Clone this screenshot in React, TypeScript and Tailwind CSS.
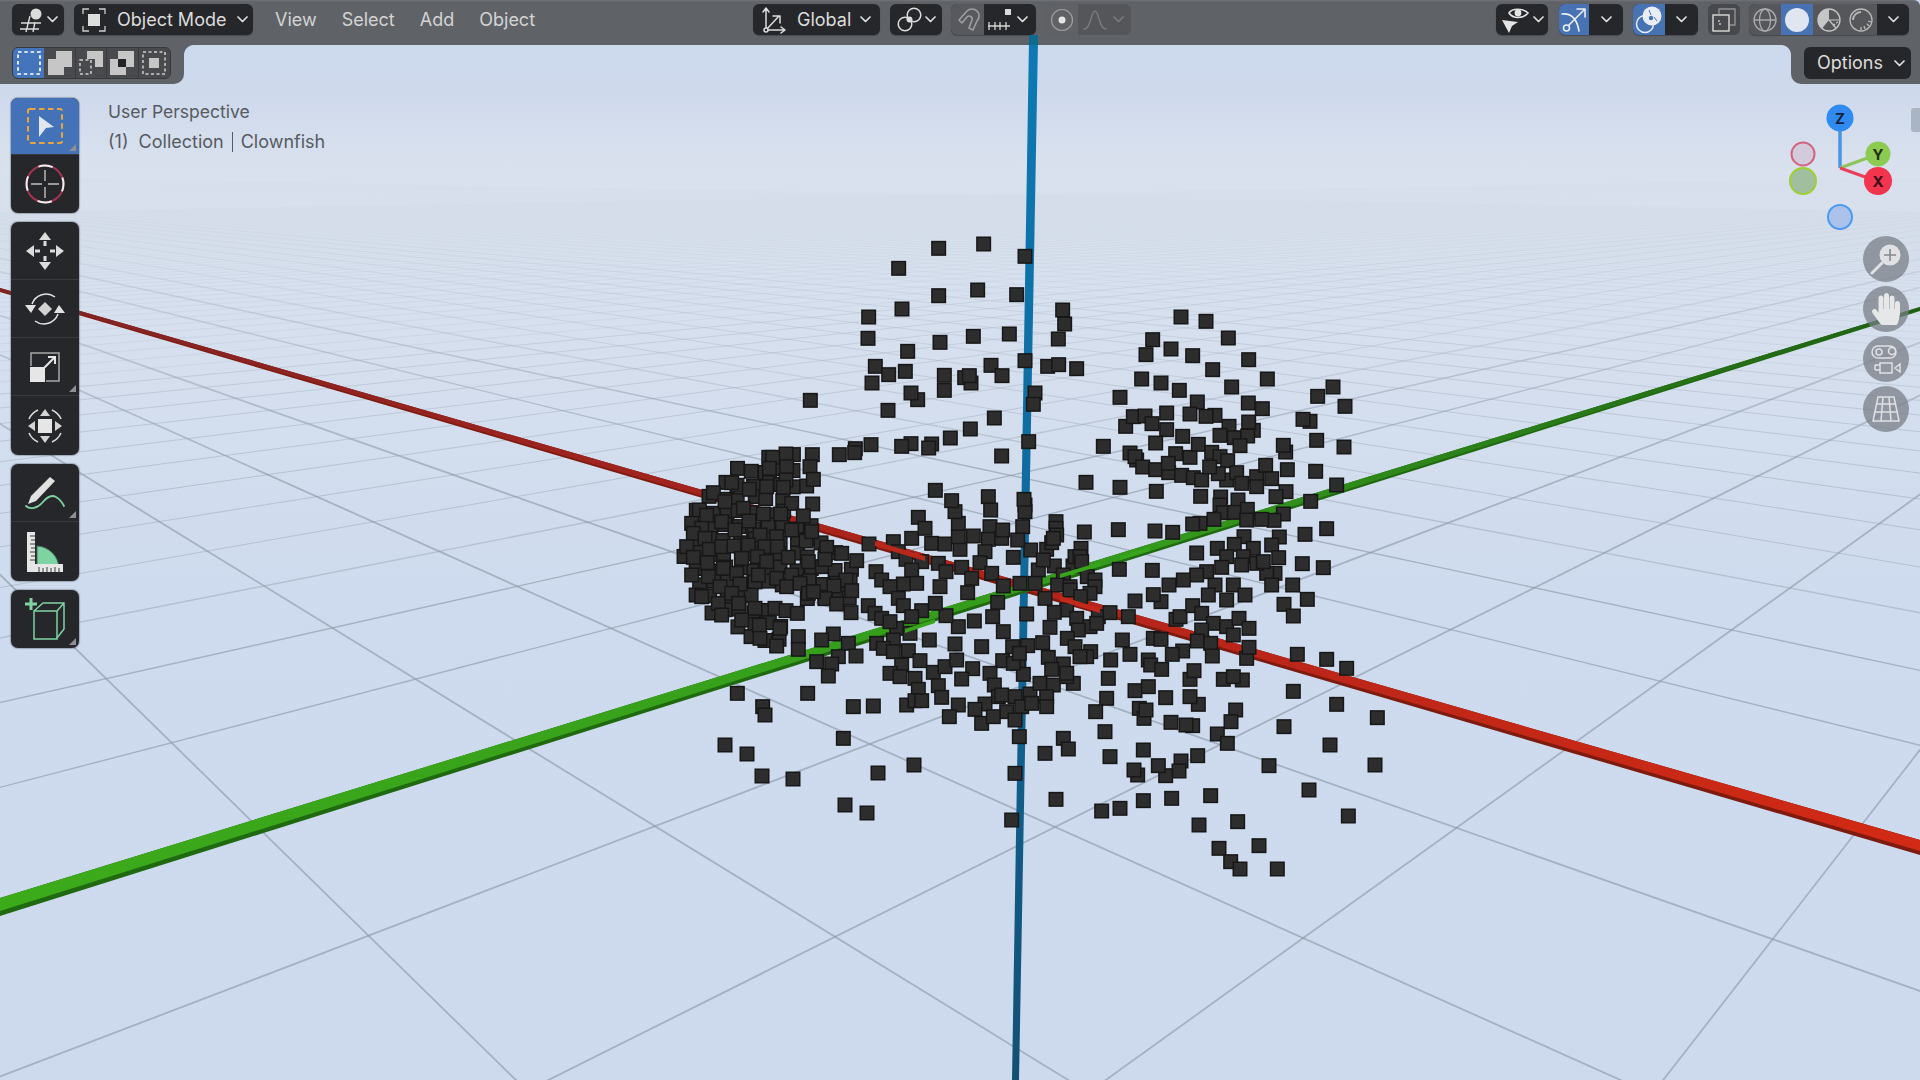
import type { ReactNode } from "react"
import { FaHandPaper } from "react-icons/fa"

// ---- viewport scene ----
const O = [1025, 587]
const VR = [-413, 170]
const VG = [2371, 170]

function along(v: number[], k: number, s: number) {
  const f = s / (s + k)
  return [O[0] + (v[0] - O[0]) * f, O[1] + (v[1] - O[1]) * f]
}

function gridLine(from: number[], p: number[]) {
  const t = (1250 - from[1]) / (p[1] - from[1])
  return [from[0], from[1], from[0] + (p[0] - from[0]) * t, 1250]
}

const gridSteps = Array.from({ length: 96 }, (_, i) => i - 9)
const gridLines = gridSteps.flatMap((s) => [
  { s, l: gridLine(VR, along(VG, 11, s)) },
  { s, l: gridLine(VG, along(VR, 5.45, s * 0.5)) },
])

const crops: [number, number, number[]][] = [
  [660, 220, [836,85,971,72,1095,109,716,145,836,227,953,210,1070,224,726,267,626,291,624,355,840,367,940,349,1048,342,1208,270,1214,312,1195,357,743,394,646,439,686,464,736,454,636,489,853,466,853,511,914,473,933,489,928,467,993,436,1026,467,1095,422,1163,439,1196,434,1250,446,773,539,753,519,684,571,1003,594,931,627,451,541,1125,519,1120,553,871,654,1106,665,1025,708,815,672,806,684,753,671,725,679,633,674,586,686,584,698,538,704,826,811,1278,787,1380,802,1380,532,1330,679,1397,619,1420,590,1410,699,1430,720]],
  [1000, 290, [543,81,618,94,685,144,458,149,513,177,438,194,578,197,746,209,638,239,425,267,483,279,802,267,695,291,538,301,360,322,592,336,745,339,787,356,999,291,953,319,1035,349,400,380,435,378,456,401,377,409,500,369,570,372,645,376,618,379,930,394,909,388,760,421,746,396,687,409,500,419,548,439,660,436,703,443,743,438,467,459,720,467,950,451,857,486,850,466,1032,471,310,469,405,500,390,489,428,531,467,539,506,548,527,491,570,502,595,463,635,487,660,500,683,512,505,520,545,556,580,563,605,570,680,570,655,551,629,531,710,548,725,580,770,560,797,526,815,566,862,539,947,544,1010,585,858,605,828,620,770,590,258,577,360,591,469,604,602,619,662,621,714,630,660,645,670,668,703,667,742,658,932,634,850,672,822,691,785,688,740,690,642,688,600,700,578,702,355,719,465,723,518,727,253,726,980,716,915,733,838,741,732,740,815,765,760,775,703,763,652,775,590,789,836,803,907,821,970,833,680,800,730,800,725,825,665,832,620,845,590,855,550,870,507,885,457,841,358,838,243,775,219,828,163,828,115,840,190,855,140,778,92,780,40,802,155,758,68,710,53,750,75,645,75,665,168,695,168,715,170,735,825,850,800,850,770,820,790,815,700,885,645,885,815,885,878,885,173,885,105,880,60,880,262,860,285,870,285,890,210,890,225,800,240,800]],
  [660, 440, [378,42,338,52,457,44,380,80,328,85,450,80,378,120,320,140,370,142,440,138,460,118,395,190,458,192,215,128,268,148,160,158,195,185,250,205,310,222,362,222,430,228,118,210,140,226,185,245,225,270,267,243,300,285,350,290,395,270,438,303,455,275,95,250,125,265,100,280,135,295,80,320,148,328,185,320,222,318,265,315,315,320,352,320,100,352,142,368,190,385,245,355,292,350,320,365,385,352,445,365,95,405,145,410,180,440,230,400,240,432,295,405,350,415,395,405,380,440,420,430,445,460,125,470,175,490,215,460,236,490,285,505,345,505,378,512,412,520,185,525,245,540,298,555,360,565,300,595,350,618,415,590,415,628,500,322,545,340,590,362,495,358,558,420,522,438,575,452,495,476,530,492,573,518,460,455,520,582,485,600,565,610,588,648,535,650,470,665,515,672,505,708,232,760,443,760,308,800,315,825,580,800,640,798,740,795,627,312,700,305,715,335,755,295,738,358,785,365,755,390,815,310,855,312,835,370,858,395,905,382,940,288,900,328,895,290,895,250,885,215,875,182,985,170,992,210,990,260,985,298,975,335,960,368,935,415,995,400,1030,438,1082,432,1125,430,1193,437,1230,450,1155,475,1185,378,1215,405,1240,378,1262,325,1250,352,1275,407,1305,425,1290,460,1262,470,1220,510,1183,517,1250,535,1315,530,1290,560,1255,570,1222,595,1170,562,1148,608,1100,522,1013,487,998,530,943,543,895,560,858,527,826,490,840,440,923,458,770,430,730,432,648,395,665,420,690,440,715,475,730,497,785,512,755,530,710,565,750,580,625,497,645,520,665,535,690,545,700,600,650,610,670,625,700,635,745,632,780,662,725,675,690,700,720,710,765,715,820,697,855,680,890,660,808,600,885,612,965,620,1030,575,1058,620,1103,617,1028,662,1075,670,1165,652,1245,620,1292,635,1280,650,1210,672,1175,688,1090,703,990,700,938,686,905,717,835,737,775,748,1003,735,1015,770,1065,770,1110,762,1140,730,1180,735,1240,730,1220,710,1160,770,1160,800,1085,800,1040,815,975,792,945,808,895,795,845,772,765,782,785,782,868,830,965,850,1000,830,1065,840,1092,178,1095,215,1085,260,1075,295,1112,330,1060,350,1135,390,1160,325,1180,295,1188,250,1025,295,1028,270,775,232,795,265,1272,275,1375,268,1378,388,1425,483,1387,600,1410,643,1352,660,1345,715,1340,775,1425,752,1307,815,1335,875,1078,890,1210,895,1278,127,1380,140,550,895,1265,365,1150,360]],
  [1000, 590, [135,25,163,66,198,60,80,73,230,85,150,113,15,125,238,122,295,80,270,105,290,100,407,33,483,35,460,14,385,80,330,68,367,150,203,145,128,160,38,170,83,165,225,175,273,185,145,202,265,205,240,200,333,208,390,193,460,145,483,148,528,88,540,80,578,47,605,70,640,100,680,110,717,85,735,15,680,30,625,15,747,115,700,135,605,120,592,153,632,160,548,183,517,193,637,198,740,205,747,172,445,210,452,225,485,238,570,268,582,242,670,268,727,270,700,260,445,290,408,303,497,323,595,343,570,320,707,360,693,395,418,355,432,385,438,360,513,397,578,407,558,405,652,432,682,460,593,497,543,513,537,543,497,557,475,527,413,555,402,540,430,480,330,500,315,425,287,365,320,325,325,263,892,193,980,208,1040,235,880,304,1010,343,1132,383,852,410,990,465,1125,525,807,527,927,600,1045,678,632,617,515,625,430,632,360,655,305,663,168,628,188,450,205,477,135,490,58,448,45,550,35,690,597,705,713,695,657,775,777,767,692,815,720,837,832,837,852,43,880,78,922,28,70,253,125,275,155,235,190,225,160,285,90,312,45,320,140,315,220,280,200,250,5,315,95,340,140,350,70,358,20,365,45,395,15,215,40,220,58,190]],
  [0, 0, [737,693,808,693,763,707,765,715,854,707,874,706,908,705,725,745,747,754,844,741,762,776,793,779,878,773,845,805,867,813,914,765].map((v) => v * 3)],
]

const squares: number[][] = []
for (const [ox, oy, flat] of crops) {
  for (let i = 0; i < flat.length; i += 2) {
    const x = ox + flat[i] / 3
    const y = oy + flat[i + 1] / 3
    if (!squares.some((p) => Math.abs(p[0] - x) < 3 && Math.abs(p[1] - y) < 3)) squares.push([x, y])
  }
}

// the dense left end of the fish: hidden squares filling the crescent
const crescent = [320,40,410,30,415,140,385,210,450,260,590,360,590,500,440,470,310,450,370,560,370,630,300,615,180,540,100,460,65,340,90,230,150,140,230,95]

function inCrescent(x: number, y: number) {
  let inside = false
  const n = crescent.length / 2
  for (let i = 0, j = n - 1; i < n; j = i++) {
    const xi = crescent[i * 2], yi = crescent[i * 2 + 1]
    const xj = crescent[j * 2], yj = crescent[j * 2 + 1]
    if (yi > y !== yj > y && x < ((xj - xi) * (y - yi)) / (yj - yi) + xi) inside = !inside
  }
  return inside
}

const fill: number[][] = []
for (let gy = 50; gy < 640; gy += 42) {
  for (let gx = 70; gx < 600; gx += 42) {
    if (inCrescent(gx, gy)) {
      fill.push([660 + (gx + 7 * Math.sin(gx * gy)) / 3, 440 + (gy + 7 * Math.cos(gx + gy)) / 3])
    }
  }
}

function Square({ x, y }: { x: number; y: number }) {
  return <rect x={x - 6.75} y={y - 6.75} width="13.5" height="13.5" fill="#2d2d2d" stroke="#171717" strokeWidth="1.5" />
}

function Scene() {
  return (
    <svg className="absolute inset-0" width="1920" height="1080" viewBox="0 0 1920 1080">
      <defs>
        <linearGradient id="horizon" x1="0" y1="0" x2="0" y2="1">
          <stop offset="0" stopColor="#d9e1ee" stopOpacity="1" />
          <stop offset="0.12" stopColor="#d9e1ee" stopOpacity="0.92" />
          <stop offset="0.4" stopColor="#d7e0ee" stopOpacity="0.55" />
          <stop offset="1" stopColor="#d3ddee" stopOpacity="0" />
        </linearGradient>
        <linearGradient id="redAxis" gradientUnits="userSpaceOnUse" x1="0" y1="0" x2="1920" y2="0">
          <stop offset="0" stopColor="#7d2424" />
          <stop offset="0.4" stopColor="#a8231c" />
          <stop offset="1" stopColor="#d22a14" />
        </linearGradient>
        <linearGradient id="greenAxis" gradientUnits="userSpaceOnUse" x1="0" y1="0" x2="1920" y2="0">
          <stop offset="0" stopColor="#3cab1a" />
          <stop offset="0.6" stopColor="#349a1c" />
          <stop offset="1" stopColor="#205f14" />
        </linearGradient>
        <linearGradient id="blueAxis" gradientUnits="userSpaceOnUse" x1="0" y1="40" x2="0" y2="1080">
          <stop offset="0" stopColor="#0d79b4" />
          <stop offset="0.5" stopColor="#10699a" />
          <stop offset="1" stopColor="#134f74" />
        </linearGradient>
      </defs>
      {gridLines.map(({ s, l }, i) => (
        <line
          key={i}
          x1={l[0]}
          y1={l[1]}
          x2={l[2]}
          y2={l[3]}
          stroke="#8b97a6"
          strokeOpacity={s > 12 ? 0.22 : s > 2 ? 0.4 : 0.62}
          strokeWidth={s < 0 ? 1.8 : s < 4 ? 1.4 : 1}
        />
      ))}
      <rect x="0" y="165" width="1920" height="315" fill="url(#horizon)" />
      <polygon points="1029,40 1038,40 1019,1080 1012,1080" fill="url(#blueAxis)" />
      <polygon points="0,288 0,292 1920,855 1920,840" fill="#7f1a0e" />
      <polygon points="0,288 0,291 1920,851 1920,840" fill="url(#redAxis)" />
      <polygon points="0,898 0,916 1920,311 1920,307" fill="#1f6a10" />
      <polygon points="0,898 0,911 1920,310 1920,307" fill="url(#greenAxis)" />
      {fill.map(([x, y], i) => (
        <Square key={i} x={x} y={y} />
      ))}
      {squares.map(([x, y], i) => (
        <Square key={i} x={x} y={y} />
      ))}
      <polygon points="875,541 925,556 925,561 875,546" fill="#b8291b" />
      <polygon points="1060,596 1100,608 1100,613 1060,601" fill="#c2291a" />
      <polygon points="905,629 935,619 935,623 905,633" fill="#38a51c" />
      <polygon points="1060,574 1100,562 1100,566 1060,578" fill="#38a51c" />
      <polygon points="1120,556 1150,547 1150,551 1120,560" fill="#38a51c" />
    </svg>
  )
}

// ---- small shared bits ----
function Chev({ dim }: { dim?: boolean }) {
  return (
    <svg width="11" height="7" viewBox="0 0 11 7" className="shrink-0">
      <path d="M1 1l4.5 4.5L10 1" fill="none" stroke={dim ? "#777a7e" : "#dedede"} strokeWidth="1.7" strokeLinecap="round" strokeLinejoin="round" />
    </svg>
  )
}

function Cell({ w, tone, children, border }: { w: string; tone: string; children?: ReactNode; border?: boolean }) {
  return <div className={`${w} ${tone} ${border ? "border-r border-[#3a3b3e]" : ""} h-full flex items-center justify-center`}>{children}</div>
}

function Group({ children }: { children: ReactNode }) {
  return <div className="h-[31px] flex rounded-[6px] overflow-hidden bg-[#26272a] shadow-[0_1px_1px_rgba(0,0,0,0.25)]">{children}</div>
}

// ---- header icons ----
function EditorIcon() {
  return (
    <svg width="24" height="26" viewBox="0 0 24 26" fill="none" stroke="#dcdcdc" strokeWidth="1.4">
      <circle cx="16" cy="7" r="5.5" fill="#dcdcdc" stroke="none" />
      <path d="M1 16h20M0 22h19M10 9L6 25M15 15l-2 10" />
    </svg>
  )
}

function ModeIcon() {
  return (
    <svg width="24" height="24" viewBox="0 0 24 24" fill="none" stroke="#cfcfcf" strokeWidth="1.3">
      <rect x="6" y="6" width="12" height="12" fill="#dcdcdc" stroke="none" />
      <path d="M1 6V1h6M17 1h6v5M23 18v5h-6M7 23H1v-5" />
    </svg>
  )
}

function GlobalIcon() {
  return (
    <svg width="24" height="28" viewBox="0 0 24 28" fill="none" stroke="#dcdcdc" strokeWidth="1.5">
      <path d="M4 24V3M1 6l3-4 3 4M4 24h18M19 21l4 3-4 3M4 24L17 10M11 10h7v7" strokeLinecap="round" strokeLinejoin="round" />
      <circle cx="4" cy="24" r="2" fill="#26272a" />
    </svg>
  )
}

function PivotIcon() {
  return (
    <svg width="25" height="25" viewBox="0 0 25 25" fill="none" stroke="#dcdcdc" strokeWidth="1.5">
      <circle cx="8" cy="17" r="6.8" />
      <circle cx="17" cy="8" r="6.8" />
      <circle cx="12.5" cy="12.5" r="3" fill="#dcdcdc" stroke="none" />
    </svg>
  )
}

function MagnetIcon() {
  return (
    <svg width="24" height="24" viewBox="0 0 24 24" fill="none" stroke="#9d9fa2" strokeWidth="1.6">
      <path d="M3 12L11 3a7 7 0 0 1 10 10l-4 9-4-2 3-8a3 3 0 0 0-5-3l-5 6z" strokeLinejoin="round" />
    </svg>
  )
}

function IncrementIcon() {
  return (
    <svg width="24" height="24" viewBox="0 0 24 24" fill="none" stroke="#d6d6d6" strokeWidth="1.3">
      <rect x="18" y="1" width="6" height="6" fill="#dcdcdc" stroke="none" />
      <path d="M1 18h22M2 14v8M8 14v8M13 14v8M19 14v8" />
    </svg>
  )
}

function ProportionalIcon() {
  return (
    <svg width="24" height="24" viewBox="0 0 24 24" fill="none">
      <circle cx="12" cy="12" r="10.5" stroke="#9d9fa2" strokeWidth="1.2" />
      <circle cx="12" cy="12" r="3.5" fill="#e6e6e6" />
    </svg>
  )
}

function FalloffIcon() {
  return (
    <svg width="24" height="22" viewBox="0 0 24 22" fill="none" stroke="#797b7f" strokeWidth="1.4">
      <path d="M1 20c7 0 7-18 11-18s4 18 11 18" strokeLinecap="round" />
    </svg>
  )
}

function EyeIcon() {
  return (
    <svg width="28" height="30" viewBox="0 0 28 30" fill="none">
      <path d="M8 8c3-5 14-5 19 0-5 6-15 6-19 0z" fill="none" stroke="#e4e4e4" strokeWidth="1.6" />
      <circle cx="17" cy="8" r="3.4" fill="#e4e4e4" />
      <path d="M1 15l16 2-6 4-3 7z" fill="#e4e4e4" />
    </svg>
  )
}

function GizmoIcon() {
  return (
    <svg width="26" height="26" viewBox="0 0 26 26" fill="none" stroke="#e9eef6" strokeWidth="1.6">
      <circle cx="5.5" cy="21" r="3" />
      <path d="M1 7c10-1 15 5 17 17M8 18L24 2M16 2h8v8" strokeLinecap="round" strokeLinejoin="round" />
    </svg>
  )
}

function OverlayIcon() {
  return (
    <svg width="28" height="28" viewBox="0 0 28 28" fill="none">
      <circle cx="10" cy="18" r="8.5" stroke="#e9eef6" strokeWidth="1.5" />
      <circle cx="17" cy="10" r="9.5" fill="#e9eef6" />
      <circle cx="16" cy="12" r="2.2" fill="#4772b3" />
      <path d="M14 4l2 5M22 15l-3-4" stroke="#4772b3" strokeWidth="1" />
    </svg>
  )
}

function XrayIcon() {
  return (
    <svg width="24" height="24" viewBox="0 0 24 24" fill="none" stroke="#c4c4c4" strokeWidth="1.4">
      <rect x="1" y="7" width="16" height="16" stroke="#dcdcdc" />
      <path d="M7 6V1h16v16h-5" stroke="#909296" />
      <path d="M7 12v4h4" strokeDasharray="2 2" />
    </svg>
  )
}

function ShadeWire() {
  return (
    <svg width="24" height="24" viewBox="0 0 24 24" fill="none" stroke="#a9abad" strokeWidth="1.3">
      <circle cx="12" cy="12" r="11" />
      <ellipse cx="12" cy="12" rx="5.5" ry="11" />
      <path d="M1 12h22" />
    </svg>
  )
}

function ShadeMaterial() {
  return (
    <svg width="24" height="24" viewBox="0 0 24 24" fill="none">
      <circle cx="12" cy="12" r="11" stroke="#c6c6c6" strokeWidth="1.3" />
      <path d="M12 1a11 11 0 0 0-7 19.5L12 12z" fill="#c6c6c6" />
      <path d="M12 12h11M12 12l7 8M16 18l2-2M19 15l2-1" stroke="#c6c6c6" strokeWidth="1.2" />
    </svg>
  )
}

function ShadeRender() {
  return (
    <svg width="24" height="24" viewBox="0 0 24 24" fill="none" stroke="#b8b8b8" strokeWidth="1.3">
      <circle cx="12" cy="12" r="11" />
      <path d="M4 12a8 8 0 0 1 8-8" strokeWidth="1.8" />
      <path d="M16 21l-1-3M20 18l-2-2M22 14l-3-1M12 22v-3" />
    </svg>
  )
}

// ---- select mode row ----
function SelectMode({ kind }: { kind: number }) {
  const grey = "#c6c6c6"
  const dash = { fill: "none", stroke: "#d0d0d0", strokeWidth: 1.5, strokeDasharray: "3 2.5" }
  return (
    <svg width="24" height="24" viewBox="0 0 24 24">
      {kind === 0 && <rect x="1" y="1" width="22" height="22" fill="none" stroke="#ffffff" strokeWidth="1.7" strokeDasharray="3.5 2.8" />}
      {kind === 1 && <path d="M8 0h16v16h-8v8H0V8h8z" fill={grey} />}
      {kind === 2 && (
        <g>
          <path d="M8 0h16v16h-8V8H8z" fill={grey} />
          <path d="M1 9h11v14H1z" {...dash} />
        </g>
      )}
      {kind === 3 && (
        <g>
          <path d="M8 0h16v16h-8V8H8zM0 8h8v8h8v8H0z" fill={grey} />
          <rect x="8" y="8" width="8" height="8" fill="#222326" />
        </g>
      )}
      {kind === 4 && (
        <g>
          <rect x="1" y="1" width="22" height="22" {...dash} />
          <rect x="7" y="7" width="10" height="10" fill={grey} />
        </g>
      )}
    </svg>
  )
}

// ---- tool icons ----
const mint = "#7fd3a3"

function ToolSelect() {
  return (
    <svg width="38" height="38" viewBox="0 0 38 38" fill="none">
      <rect x="2" y="2" width="34" height="34" rx="2" stroke="#e8a63c" strokeWidth="2" strokeDasharray="5.5 3.5" />
      <path d="M13 9l15 11-8 1-7 9z" fill="#dfe6f2" />
    </svg>
  )
}

function ToolCursor() {
  return (
    <svg width="42" height="42" viewBox="0 0 42 42" fill="none">
      <circle cx="21" cy="21" r="18.5" stroke="#a23553" strokeWidth="2" />
      <circle cx="21" cy="21" r="18.5" stroke="#f0f0f0" strokeWidth="2" strokeDasharray="14.5 14.5" strokeDashoffset="7" />
      <path d="M21 7v11M21 24v11M7 21h11M24 21h11" stroke="#c0c0c0" strokeWidth="1.4" />
    </svg>
  )
}

function ToolMove() {
  return (
    <svg width="40" height="40" viewBox="0 0 40 40" fill="#dcdcdc">
      <path d="M20 1l6 8H14zM20 39l-6-8h12zM1 20l8-6v12zM39 20l-8 6V14z" />
      <path d="M18.5 10h3v5h-3zM18.5 25h3v5h-3zM10 18.5h5v3h-5zM25 18.5h5v3h-5z" />
    </svg>
  )
}

function ToolRotate() {
  return (
    <svg width="40" height="34" viewBox="0 0 40 34" fill="none" stroke="#e2e2e2" strokeWidth="1.5">
      <path d="M7 12A15 15 0 0 1 30 5M33 22A15 15 0 0 1 10 29" />
      <path d="M0 13h11l-5 8zM40 21H29l5-8z" fill="#e2e2e2" stroke="none" />
      <path d="M20 10l7 7-7 7-7-7z" fill="#d2d2d2" stroke="none" />
    </svg>
  )
}

function ToolScale() {
  return (
    <svg width="30" height="30" viewBox="0 0 30 30" fill="none">
      <path d="M1 14V1h28v28H16" stroke="#a8a8a8" strokeWidth="1.5" />
      <rect x="0" y="15" width="15" height="15" fill="#e6e6e6" />
      <path d="M14 16L25 5M18 5h7v7" stroke="#e6e6e6" strokeWidth="2" />
    </svg>
  )
}

function ToolTransform() {
  return (
    <svg width="38" height="38" viewBox="0 0 38 38" fill="none">
      <path d="M3 12A18 18 0 0 1 12 3M26 3a18 18 0 0 1 9 9M35 26a18 18 0 0 1-9 9M12 35a18 18 0 0 1-9-9" stroke="#d8d8d8" strokeWidth="1.6" />
      <rect x="12" y="12" width="14" height="14" fill="#e6e6e6" />
      <path d="M19 2l5 7H14zM19 36l-5-7h10zM2 19l7-5v10zM36 19l-7 5V14z" fill="#d4d4d4" />
    </svg>
  )
}

function ToolAnnotate() {
  return (
    <svg width="44" height="34" viewBox="0 0 44 34" fill="none">
      <path d="M27 1l5 4-19 20-8 3 3-8z" fill="#e2e2e2" />
      <path d="M3 30c4 4 12 2 16-3s9-9 14-6 7 7 8 9" stroke={mint} strokeWidth="1.8" strokeLinecap="round" />
    </svg>
  )
}

function ToolMeasure() {
  return (
    <svg width="36" height="40" viewBox="0 0 36 40" fill="none">
      <path d="M10 14a23 23 0 0 1 22 22H10z" fill={mint} stroke="#3c6e55" strokeWidth="1" />
      <path d="M0 0h8v32h28v8H0z" fill="#e6e6e6" />
      <path d="M3 4h5M4 8h4M3 12h5M4 16h4M3 20h5M4 24h4M3 28h5M12 35v5M16 36v4M20 35v5M24 36v4M28 35v5M32 36v4" stroke="#3c3c3c" strokeWidth="1" />
    </svg>
  )
}

function ToolAdd() {
  return (
    <svg width="42" height="42" viewBox="0 0 42 42" fill="none" stroke={mint} strokeWidth="1.5">
      <path d="M7 0v12M1 6h12" strokeWidth="3" />
      <path d="M10 13h23v28H10z" />
      <path d="M10 13l9-8h21v26l-7 9M33 13l7-8" />
    </svg>
  )
}

function Corner() {
  return <div className="absolute right-[3px] bottom-[3px] w-0 h-0 border-l-[7px] border-l-transparent border-b-[7px] border-b-[#8d9095]" />
}

function Tool({ active, corner, h = "h-[58px]", children }: { active?: boolean; corner?: boolean; h?: string; children: ReactNode }) {
  return (
    <div className={`${h} relative flex items-center justify-center border-b border-[#38393c] last:border-b-0 ${active ? "bg-[#4372b8]" : ""}`}>
      {children}
      {corner && <Corner />}
    </div>
  )
}

function ToolGroup({ children }: { children: ReactNode }) {
  return <div className="rounded-[7px] overflow-hidden bg-[#26272a] shadow-[0_0_1px_1px_rgba(70,75,85,0.35)]">{children}</div>
}

// ---- gizmo + nav ----
function AxisGizmo() {
  return (
    <svg className="absolute left-[1780px] top-[95px]" width="120" height="140" viewBox="1780 95 120 140">
      <line x1="1840" y1="168" x2="1840" y2="125" stroke="#4c93e6" strokeWidth="3.5" />
      <line x1="1840" y1="168" x2="1870" y2="157" stroke="#8fc45a" strokeWidth="3" />
      <line x1="1840" y1="168" x2="1868" y2="178" stroke="#e8405a" strokeWidth="3" />
      <circle cx="1803" cy="154" r="11.5" fill="#d3cbdb" stroke="#d2647f" strokeWidth="2" />
      <circle cx="1803" cy="181" r="13" fill="#a1bf9f" stroke="#9ed032" strokeWidth="2" />
      <circle cx="1840" cy="217" r="12" fill="#abc3ec" stroke="#4b99ef" strokeWidth="2" />
      <circle cx="1840" cy="118" r="13.5" fill="#2f8bf0" />
      <circle cx="1878" cy="154" r="12.5" fill="#8ccb52" />
      <circle cx="1878" cy="181" r="14" fill="#f2344f" />
      <g fontSize="15" fontWeight="700" textAnchor="middle" fontFamily="Inter, sans-serif" fill="#14233a">
        <text x="1840" y="123.5">Z</text>
        <text x="1878" y="159.5" fill="#223016">Y</text>
        <text x="1878" y="186.5" fill="#3a0f16">X</text>
      </g>
    </svg>
  )
}

function NavButton({ children }: { children: ReactNode }) {
  return <div className="w-[46px] h-[46px] rounded-full bg-[rgba(118,124,132,0.72)] flex items-center justify-center">{children}</div>
}

function NavZoom() {
  return (
    <svg width="34" height="34" viewBox="0 0 34 34" fill="none">
      <circle cx="21" cy="13" r="10.5" fill="#dfe1e4" />
      <path d="M21 7v12M15 13h12" stroke="#85898f" strokeWidth="1.6" />
      <path d="M13 21L3 31" stroke="#dfe1e4" strokeWidth="3" strokeLinecap="round" />
    </svg>
  )
}

function NavCamera() {
  return (
    <svg width="30" height="32" viewBox="0 0 30 32" fill="none" stroke="#dfe1e4" strokeWidth="1.5">
      <rect x="1" y="3" width="24" height="12" rx="6" />
      <circle cx="8" cy="9" r="3" />
      <circle cx="21" cy="8" r="3.5" />
      <path d="M9 20h12v10H9zM4 22h5M4 27h5M4 22v5M29 21l-5 4 5 4z" />
    </svg>
  )
}

function NavPerspective() {
  return (
    <svg width="28" height="26" viewBox="0 0 28 26" fill="none" stroke="#dfe1e4" strokeWidth="1.5">
      <path d="M6 1h16l5 24H1zM4 8h20M2 16h24M11 1L9 25M17 1l2 24" />
    </svg>
  )
}

export default function App() {
  const headerBg = "bg-[#5f6267]"
  return (
    <div className="relative w-[1920px] h-[1080px] overflow-hidden [font-family:Inter,sans-serif] bg-[linear-gradient(180deg,#cbd9ee_0px,#ced9ec_90px,#d9e1ee_165px,#d7e0ee_300px,#cedbee_600px,#cddaee_1080px)]">
      <Scene />

      {/* header */}
      <div className={`relative h-[45px] flex pt-[4px] ${headerBg} rounded-tr-[6px] shadow-[inset_0_3px_2px_-2px_rgba(255,255,255,0.12)]`}>
        <div className="w-[753px] shrink-0 flex pl-[12px]">
          <Group>
            <div className="w-[52px] flex items-center pl-[8px] gap-[3px]">
              <EditorIcon />
              <Chev />
            </div>
          </Group>
          <div className="ml-[10px]">
            <Group>
              <div className="w-[179px] flex items-center pl-[8px] pr-[5px]">
                <ModeIcon />
                <span className="ml-[11px] text-[18px] text-[#dcdcdc] leading-none">Object Mode</span>
                <span className="ml-auto">
                  <Chev />
                </span>
              </div>
            </Group>
          </div>
          <div className="ml-[22px] h-[31px] flex items-center gap-[25px] text-[18px] text-[#d4d4d4] leading-none">
            <span>View</span>
            <span>Select</span>
            <span>Add</span>
            <span>Object</span>
          </div>
        </div>

        <Group>
          <div className="w-[127px] flex items-center pl-[9px] pr-[9px]">
            <GlobalIcon />
            <span className="ml-[11px] text-[18px] text-[#dcdcdc] leading-none">Global</span>
            <span className="ml-auto">
              <Chev />
            </span>
          </div>
        </Group>
        <div className="ml-[10px]">
          <Group>
            <div className="w-[52px] flex items-center justify-center gap-[3px]">
              <PivotIcon />
              <Chev />
            </div>
          </Group>
        </div>
        <div className="ml-[9px]">
          <Group>
            <Cell w="w-[33px]" tone="bg-[#58595c]">
              <MagnetIcon />
            </Cell>
            <div className="w-[52px] flex items-center gap-[6px] pl-[3px]">
              <IncrementIcon />
              <Chev />
            </div>
          </Group>
        </div>
        <div className="ml-[10px] h-[31px] flex rounded-[6px] overflow-hidden bg-[#54565a]">
          <Cell w="w-[32px]" tone="bg-[#606164]">
            <ProportionalIcon />
          </Cell>
          <div className="w-[53px] flex items-center gap-[6px] pl-[5px]">
            <FalloffIcon />
            <Chev dim />
          </div>
        </div>

        <div className="ml-auto pr-[11px] flex">
          <Group>
            <div className="w-[52px] flex items-center justify-center gap-[4px]">
              <EyeIcon />
              <Chev />
            </div>
          </Group>
          <div className="ml-[11px]">
            <Group>
              <Cell w="w-[30px]" tone="bg-[#4772b3]">
                <GizmoIcon />
              </Cell>
              <Cell w="w-[34px]" tone="">
                <Chev />
              </Cell>
            </Group>
          </div>
          <div className="ml-[10px]">
            <Group>
              <Cell w="w-[32px]" tone="bg-[#4772b3]">
                <OverlayIcon />
              </Cell>
              <Cell w="w-[33px]" tone="">
                <Chev />
              </Cell>
            </Group>
          </div>
          <div className="ml-[10px] h-[31px] w-[32px] rounded-[6px] bg-[#47494c] flex items-center justify-center">
            <XrayIcon />
          </div>
          <div className="ml-[9px]">
            <Group>
              <Cell w="w-[32px]" tone="bg-[#55575a]">
                <ShadeWire />
              </Cell>
              <Cell w="w-[32px]" tone="bg-[#4772b3]">
                <div className="w-[24px] h-[24px] rounded-full bg-[#dfe6f2]" />
              </Cell>
              <Cell w="w-[32px]" tone="bg-[#55575a]">
                <ShadeMaterial />
              </Cell>
              <Cell w="w-[32px]" tone="bg-[#55575a]">
                <ShadeRender />
              </Cell>
              <Cell w="w-[32px]" tone="">
                <Chev />
              </Cell>
            </Group>
          </div>
        </div>
      </div>

      {/* tool settings tabs */}
      <div className="relative flex">
        <div className={`w-[184px] h-[39px] ${headerBg} rounded-br-[10px] pt-[2px] pl-[12px]`}>
          <div className="w-[159px] h-[32px] flex rounded-[6px] overflow-hidden border border-[#38393c] bg-[#484a4d]">
            <Cell w="w-[31.4px]" tone="bg-[#4475ba]">
              <SelectMode kind={0} />
            </Cell>
            {[1, 2, 3, 4].map((k) => (
              <Cell key={k} w="w-[31.4px]" tone="" border={k < 4}>
                <SelectMode kind={k} />
              </Cell>
            ))}
          </div>
        </div>
        <div className="w-[10px] h-[10px] bg-[radial-gradient(circle_at_100%_100%,transparent_9.5px,#5f6267_10.5px)]" />
        <div className="flex-1" />
        <div className="w-[10px] h-[10px] bg-[radial-gradient(circle_at_0%_100%,transparent_9.5px,#5f6267_10.5px)]" />
        <div className={`w-[129px] h-[39px] ${headerBg} rounded-bl-[10px] pt-[2px] pl-[13px]`}>
          <div className="w-[107px] h-[32px] rounded-[6px] bg-[#26272a] flex items-center pl-[13px] pr-[6px]">
            <span className="text-[18px] text-[#dcdcdc] leading-none">Options</span>
            <span className="ml-auto">
              <Chev />
            </span>
          </div>
        </div>
      </div>

      {/* axis showing under the header */}
      <div className="absolute left-[1029px] top-[35px] w-[9px] h-[10px] bg-[#0f6a92]" />

      {/* viewport text */}
      <div className="absolute left-[108px] top-[97px] text-[18px] leading-[30px] text-[#565a61]">
        <div className="text-[17.5px]">User Perspective</div>
        <div className="flex items-center whitespace-pre">
          <span>(1)  Collection</span>
          <span className="mx-[8px] w-px h-[20px] bg-[#565a61]" />
          <span>Clownfish</span>
        </div>
      </div>

      {/* toolbar */}
      <div className="absolute left-[11px] top-[98px] w-[68px] flex flex-col gap-[9px]">
        <ToolGroup>
          <Tool active corner h="h-[57px]">
            <ToolSelect />
          </Tool>
          <Tool>
            <ToolCursor />
          </Tool>
        </ToolGroup>
        <ToolGroup>
          <Tool>
            <ToolMove />
          </Tool>
          <Tool>
            <ToolRotate />
          </Tool>
          <Tool corner>
            <ToolScale />
          </Tool>
          <Tool h="h-[59px]">
            <ToolTransform />
          </Tool>
        </ToolGroup>
        <ToolGroup>
          <Tool corner>
            <ToolAnnotate />
          </Tool>
          <Tool h="h-[59px]">
            <ToolMeasure />
          </Tool>
        </ToolGroup>
        <ToolGroup>
          <Tool corner>
            <ToolAdd />
          </Tool>
        </ToolGroup>
      </div>

      <AxisGizmo />

      {/* navigation buttons */}
      <div className="absolute left-[1863px] top-[236px] flex flex-col gap-[4px]">
        <NavButton>
          <NavZoom />
        </NavButton>
        <NavButton>
          <FaHandPaper className="w-[30px] h-[32px] text-[#e6e7e8]" />
        </NavButton>
        <NavButton>
          <NavCamera />
        </NavButton>
        <NavButton>
          <NavPerspective />
        </NavButton>
      </div>

      <div className="absolute left-[1911px] top-[108px] w-[9px] h-[24px] rounded-l-[3px] bg-[#aab5c3]" />
    </div>
  )
}
